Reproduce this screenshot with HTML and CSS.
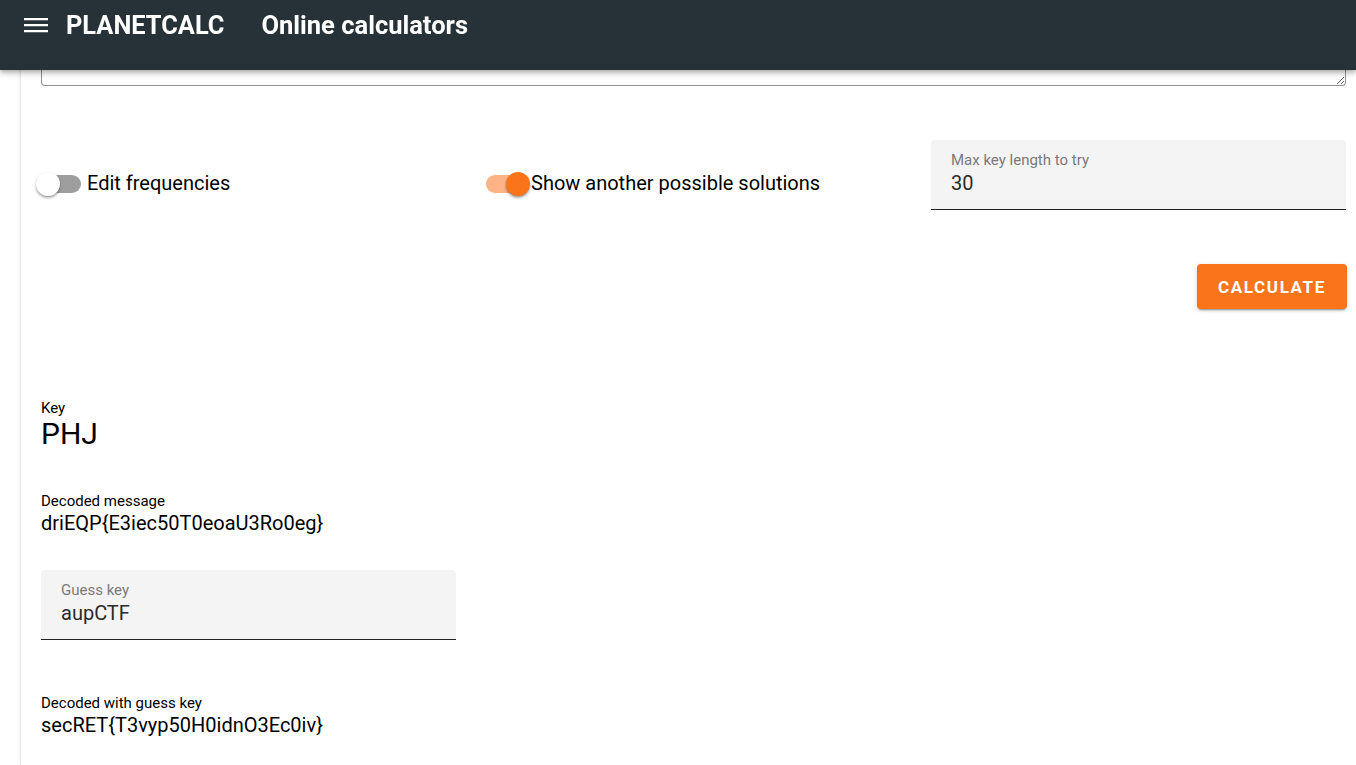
FILE: index.html
```html
<!DOCTYPE html>
<html lang="en">
<head>
<meta charset="utf-8">
<title>PLANETCALC Online calculators</title>
<link rel="stylesheet" href="styles.css">
</head>
<body>
<header class="topbar">
  <span class="menu-icon" aria-hidden="true">
    <svg width="24" height="16" viewBox="0 0 24 16"><path d="M0 1h24v2.2H0zM0 7h24v2.2H0zM0 13h24v2.2H0z" fill="#fff"/></svg>
  </span>
  <span class="brand">PLANETCALC</span>
  <span class="title">Online calculators</span>
</header>
<main class="page">
  <section class="card">
    <textarea class="cipher" aria-label="Ciphertext"></textarea>

    <div class="options">
      <label class="switch-field">
        <span class="switch"><span class="track"></span><span class="thumb"></span></span>
        <span class="switch-text">Edit frequencies</span>
      </label>
      <label class="switch-field on">
        <span class="switch"><span class="track"></span><span class="thumb"></span></span>
        <span class="switch-text">Show another possible solutions</span>
      </label>
      <div class="field">
        <span class="field-label">Max key length to try</span>
        <span class="field-value">30</span>
      </div>
    </div>

    <div class="actions">
      <button class="calc-btn" type="button">CALCULATE</button>
    </div>

    <div class="results">
      <div class="result key">
        <div class="result-label">Key</div>
        <div class="result-value big">PHJ</div>
      </div>
      <div class="result decoded">
        <div class="result-label">Decoded message</div>
        <div class="result-value">driEQP{E3iec50T0eoaU3Ro0eg}</div>
      </div>
      <div class="field guess">
        <span class="field-label">Guess key</span>
        <span class="field-value">aupCTF</span>
      </div>
      <div class="result guessed">
        <div class="result-label">Decoded with guess key</div>
        <div class="result-value">secRET{T3vyp50H0idnO3Ec0iv}</div>
      </div>
    </div>
  </section>
</main>
</body>
</html>
```

FILE: styles.css
```css
* { box-sizing: border-box; }
html, body { margin: 0; padding: 0; background: #fff; }
body {
  font-family: Roboto, "Liberation Sans", Arial, sans-serif;
  color: #000;
  height: 765px;
  overflow: hidden;
}

.topbar {
  position: fixed;
  top: 0; left: 0; right: 0;
  height: 70px;
  background: #263238;
  color: #fff;
  display: flex;
  align-items: center;
  padding: 0 0 20px 24px;
  z-index: 10;
  box-shadow: 0 2px 4px -1px rgba(0,0,0,.2), 0 4px 5px 0 rgba(0,0,0,.14), 0 1px 10px 0 rgba(0,0,0,.12);
}
.menu-icon { width: 24px; height: 16px; display: flex; margin-top: 0; }
.brand {
  margin-left: 18px;
  font-size: 25.4px;
  font-weight: 700;
  margin-top: -1px;
}
.title {
  margin-left: 37px;
  font-size: 25.5px;
  font-weight: 700;
  margin-top: -1px;
}

.page { padding-left: 20px; }
.card {
  border-left: 1px solid #e6e6e6;
  box-shadow: -1px 0 3px rgba(0,0,0,.06);
  padding: 0 10px 0 20px;
  min-height: 765px;
}

.cipher {
  display: block;
  width: 100%;
  height: 86px;
  margin: 0;
  border: 1px solid #8f8f8f;
  border-radius: 0 0 4px 4px;
  border-top: none;
  resize: vertical;
  font-family: inherit;
}

.options {
  display: grid;
  grid-template-columns: repeat(3, 1fr);
  column-gap: 30px;
  margin-top: 54px;
  align-items: center;
}
.switch-field {
  display: flex;
  align-items: center;
  font-size: 20px;
  color: #000;
  margin-top: 16px;
}
.switch {
  position: relative;
  width: 40px;
  height: 24px;
  flex: none;
  margin-right: 6px;
}
.track {
  position: absolute;
  left: 0; top: 4px;
  width: 40px; height: 18px;
  border-radius: 9px;
  background: #9e9e9e;
}
.thumb {
  position: absolute;
  left: -5px; top: 1px;
  width: 24px; height: 24px;
  border-radius: 50%;
  background: #fff;
  box-shadow: 0 2px 3px rgba(0,0,0,.3), 0 1px 1px rgba(0,0,0,.14);
}
.switch-field.on .track { background: #fdb386; width: 36px; }
.switch-field.on .thumb { left: 20px; background: #fa7419; }
.switch-field.on .switch { margin-right: 0; width: 45px; }

.field {
  display: flex;
  flex-direction: column;
  background: #f4f4f4;
  border-radius: 4px 4px 0 0;
  border-bottom: 1px solid #222;
  height: 70px;
  padding: 11px 20px 0;
}
.field-label { font-size: 15px; line-height: 19px; color: #7a7a7a; }
.field-value { font-size: 20px; line-height: 26px; color: #2a2a2a; margin-top: 0; }

.actions {
  display: flex;
  justify-content: flex-end;
  margin-top: 54px;
  margin-right: -1px;
}
.calc-btn {
  width: 150px;
  height: 45px;
  border: none;
  border-radius: 4px;
  background: #fa7419;
  color: #fff;
  font-family: inherit;
  font-size: 17px;
  font-weight: 700;
  letter-spacing: 1.6px;
  box-shadow: 0 3px 1px -2px rgba(0,0,0,.2), 0 2px 2px 0 rgba(0,0,0,.14), 0 1px 5px 0 rgba(0,0,0,.12);
  padding: 0;
}

.results { margin-top: 91px; }
.result-label { font-size: 15px; line-height: 16px; }
.result-value { font-size: 20px; line-height: 28px; }
.result-value.big { font-size: 30px; line-height: 36px; }
.decoded { margin-top: 41px; }
.field.guess { width: 415px; margin-top: 33px; height: 70px; padding-top: 11px; }
.guessed { margin-top: 55px; }
```
